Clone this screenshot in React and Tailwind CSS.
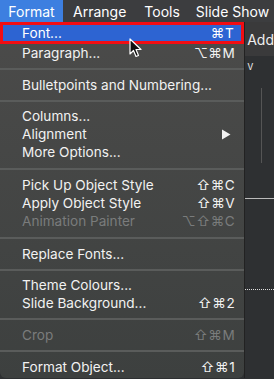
import React from "react";

const Row = ({ label, shortcut, disabled, arrow }) => (
  <div
    className={`flex h-[18px] items-center justify-between pl-[22px] pr-[9px] ${
      disabled ? "text-[#7a7c7c]" : "text-[#f2f2f2]"
    }`}
  >
    <span>{label}</span>
    {arrow ? (
      <svg width="10" height="11" viewBox="0 0 10 11" className="mr-[4px]">
        <path d="M1 0.5 L9.5 5.5 L1 10.5 Z" fill="#f2f2f2" />
      </svg>
    ) : (
      <span className="tracking-[0.5px]">{shortcut}</span>
    )}
  </div>
);

const Sep = ({ h }) => (
  <div className={`flex ${h} items-center`}>
    <div className="h-[2px] w-full bg-[#5a5c5b]" />
  </div>
);

const Cursor = () => (
  <svg
    width="14"
    height="20"
    viewBox="0 0 14 20"
    className="absolute left-[126px] top-[13px]"
  >
    <path
      d="M1 1 L1 16 L4.5 12.5 L7 18.5 L9.5 17.5 L7 11.5 L12 11.5 Z"
      fill="#111"
      stroke="#fff"
      strokeWidth="1.2"
      strokeLinejoin="round"
    />
  </svg>
);

const App = () => {
  return (
    <div
      className="h-[379px] w-[274px] overflow-hidden bg-[#2e3032] text-[13.6px]"
      style={{ fontFamily: "Inter, 'DejaVu Sans', sans-serif" }}
    >
      {/* menu bar */}
      <div className="flex h-[22px] items-center whitespace-nowrap bg-[#3c3d3f] text-[14px] text-white">
        <div className="flex h-full w-[63px] items-center justify-center bg-[#3d7fe0]">Format</div>
        <div className="pl-[10px]">Arrange</div>
        <div className="pl-[18px]">Tools</div>
        <div className="pl-[16px]">Slide Show</div>
      </div>

      <div className="flex">
        {/* dropdown */}
        <div className="relative w-[247px] rounded-b-[6px] bg-gradient-to-b from-[#4b4b4a] to-[#3d403f] pb-[2px]">
          <div className="relative flex h-[22px] items-center justify-between border-[3px] border-[#f20d13] bg-[#2d64d2] pl-[19px] pr-[7px] text-white">
            <span>Font...</span>
            <span className="tracking-[0.5px]">⌘T</span>
            <Cursor />
          </div>
          <Row label="Paragraph..." shortcut="⌥⌘M" />
          <Sep h="h-[14px]" />
          <Row label="Bulletpoints and Numbering..." />
          <Sep h="h-[13px]" />
          <Row label="Columns..." />
          <Row label="Alignment" arrow />
          <Row label="More Options..." />
          <Sep h="h-[15px]" />
          <Row label="Pick Up Object Style" shortcut="⇧⌘C" />
          <Row label="Apply Object Style" shortcut="⇧⌘V" />
          <Row label="Animation Painter" shortcut="⌥⇧⌘C" disabled />
          <Sep h="h-[15px]" />
          <Row label="Replace Fonts..." />
          <Sep h="h-[13px]" />
          <Row label="Theme Colours..." />
          <Row label="Slide Background..." shortcut="⇧⌘2" />
          <Sep h="h-[14px]" />
          <Row label="Crop" shortcut="⇧⌘M" disabled />
          <Sep h="h-[14px]" />
          <Row label="Format Object..." shortcut="⇧⌘1" />
        </div>

        {/* window behind */}
        <div className="flex flex-1 flex-col border-l border-[#222]">
          <div className="flex h-[34px] items-center bg-[#3a3a3b] pl-[2px] text-[14px] text-[#eee]">Add</div>
          <div className="flex h-[18px] items-end pl-[2px] text-[11px] text-[#ddd]">v</div>
          <div className="ml-[16px] mt-[14px] h-[75px] w-px bg-[#555]" />
          <div className="mt-[35px] h-px w-full bg-[#bbb]" />
          <div className="mt-[90px] h-0 w-full border-t border-dotted border-[#ddd]" />
        </div>
      </div>
    </div>
  );
};

export default App;
